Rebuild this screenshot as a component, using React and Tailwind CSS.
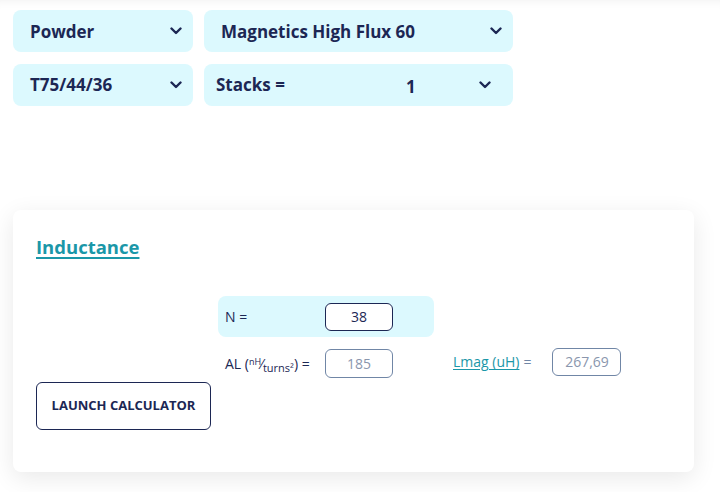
import React from 'react';

// Small bold chevron used by the select boxes
const Chevron = () => (
  <svg width="12" height="8" viewBox="0 0 12 8" className="text-[#1c2754]">
    <path d="M1.5 1.5 L6 6 L10.5 1.5" fill="none" stroke="currentColor" strokeWidth="2.4" strokeLinecap="round" strokeLinejoin="round" />
  </svg>
);

const SelectBox = ({ label, width, textClass = '' }) => (
  <div className={`${width} h-[42px] flex items-center justify-between pl-[17px] pr-[11px] rounded-lg bg-[#dcf9fe]`}>
    <span className={`text-[17px] font-bold text-[#1c2754] ${textClass}`}>{label}</span>
    <Chevron />
  </div>
);

const App = () => {
  return (
    <div
      className="w-[720px] h-[492px] bg-white overflow-hidden shadow-[inset_0_9px_10px_-8px_rgba(0,0,0,0.06)]"
      style={{ fontFamily: '"Open Sans", "Noto Sans", sans-serif' }}
    >
      {/* --- Selectors --- */}
      <div className="flex flex-col gap-3 pt-[10px] pl-[13px]">
        <div className="flex gap-[11px]">
          <SelectBox label="Powder" width="w-[180px]" textClass="mt-[2px]" />
          <SelectBox label="Magnetics High Flux 60" width="w-[309px]" textClass="mt-[2px]" />
        </div>
        <div className="flex gap-[11px]">
          <SelectBox label="T75/44/36" width="w-[180px]" />
          <div className="w-[309px] h-[42px] flex items-center pl-[12px] pr-[22px] rounded-lg bg-[#dcf9fe]">
            <span className="text-[17px] font-bold text-[#1c2754] w-[190px]">Stacks =</span>
            <span className="text-[17px] font-bold text-[#1c2754] mt-1">1</span>
            <span className="ml-auto"><Chevron /></span>
          </div>
        </div>
      </div>

      {/* --- Inductance card --- */}
      <div className="mt-[104px] ml-[13px] w-[681px] h-[262px] bg-white rounded-lg shadow-[0_6px_24px_rgba(0,0,0,0.09)] pt-[24px] pl-[23px]">
        <h2 className="text-[18.5px] font-bold text-[#1b97a8] underline underline-offset-[3px] decoration-[1.5px] leading-[26px]">
          Inductance
        </h2>

        <div className="mt-[36px] flex flex-col">
          {/* N row */}
          <div className="flex">
            <div className="w-[182px]" />
            <div className="w-[216px] h-[41px] rounded-lg bg-[#dcf9fe] flex items-center pl-[7px]">
              <span className="w-[100px] text-[14px] text-[#1c2754]">N =</span>
              <div className="w-[68px] h-[28px] rounded-md border-[1.5px] border-[#1c2754] bg-white flex items-center justify-center text-[14px] text-[#1c2754]">
                38
              </div>
            </div>
          </div>

          {/* AL + Lmag row */}
          <div className="flex items-center mt-[12px]">
            <div className="w-[189px]" />
            <div className="w-[228px] flex items-center">
              <span className="w-[100px] text-[14px] text-[#1c2754] whitespace-nowrap">
                AL (<sup className="text-[9px]">nH</sup>⁄<sub className="text-[11px]">turns²</sub>) =
              </span>
              <div className="w-[68px] h-[29px] rounded-md border-[1.5px] border-[#7086a6] bg-white flex items-center justify-center text-[14px] text-[#8a96ad]">
                185
              </div>
            </div>
            <div className="flex items-center -mt-[4px]">
              <span className="text-[14px] text-[#1b97a8] underline underline-offset-2">Lmag (uH)</span>
              <span className="text-[14px] text-[#7086a6] ml-1 w-[29px]">=</span>
              <div className="w-[69px] h-[28px] rounded-md border-[1.5px] border-[#7086a6] bg-white flex items-center justify-center text-[14px] text-[#8a96ad]">
                267,69
              </div>
            </div>
          </div>

          {/* Launch button */}
          <button
            type="button"
            className="mt-[4px] w-[175px] h-[48px] rounded-md border-[1.5px] border-[#1c2754] bg-white text-[13px] font-bold text-[#1c2754] uppercase"
          >
            Launch calculator
          </button>
        </div>
      </div>
    </div>
  );
};

export default App;
